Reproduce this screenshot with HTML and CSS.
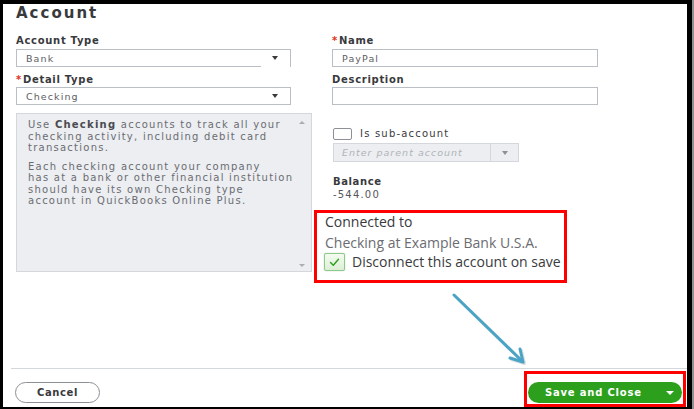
FILE: index.html
```html
<!DOCTYPE html>
<html lang="en">
<head>
<meta charset="utf-8">
<title>Account</title>
<link rel="stylesheet" href="styles.css">
</head>
<body>
<div class="frame">
  <div class="panel">
    <h1 class="title">Account</h1>
    <div class="form">
      <div class="col col-left">
        <div class="label">Account Type</div>
        <div class="select notch"><span class="val">Bank</span><i class="caret"></i></div>
        <div class="label label-gap"><span class="req">*</span>Detail Type</div>
        <div class="select select-b"><span class="val">Checking</span><i class="caret"></i></div>
        <div class="help">
          <div class="help-text">
            <p>Use <b>Checking</b> accounts to track all your<br>checking activity, including debit card<br>transactions.</p>
            <p>Each checking account your company<br>has at a bank or other financial institution<br>should have its own Checking type<br>account in QuickBooks Online Plus.</p>
          </div>
          <div class="scroll"><i class="sc-up"></i><i class="sc-down"></i></div>
        </div>
      </div>
      <div class="col col-right">
        <div class="label"><span class="req">*</span>Name</div>
        <div class="input"><span class="val">PayPal</span></div>
        <div class="label label-gap">Description</div>
        <div class="input input-b"></div>
        <div class="sub-row"><span class="box"></span><span class="sub-text">Is sub-account</span></div>
        <div class="parent"><span class="ph">Enter parent account</span><span class="parent-btn"><i class="caret caret-gray"></i></span></div>
        <div class="balance-label">Balance</div>
        <div class="balance">-544.00</div>
        <div class="callout">
          <div class="conn">Connected to</div>
          <div class="bank">Checking at Example Bank U.S.A.</div>
          <div class="disc">
            <span class="box-on"><svg width="19" height="16" viewBox="0 0 19 16"><path d="M5.5 8.5 L8.3 11.2 L13.5 5.2" fill="none" stroke="#2ca01c" stroke-width="1.4" stroke-linecap="round" stroke-linejoin="round"/></svg></span>
            <span class="disc-text">Disconnect this account on save</span>
          </div>
        </div>
      </div>
    </div>
    <div class="footer">
      <button class="cancel">Cancel</button>
      <div class="highlight">
        <button class="save"><span>Save and Close</span><i class="caret caret-white"></i></button>
      </div>
    </div>
  </div>
  <svg class="arrow" width="694" height="409" viewBox="0 0 694 409">
    <g stroke="#8fa3ad" stroke-opacity="0.35" stroke-width="3" fill="none" stroke-linecap="round" stroke-linejoin="round">
      <line x1="455.5" y1="296.5" x2="523.5" y2="362.5"/>
      <polyline points="511.5,359.5 524.5,363.5 521.5,350.5"/>
    </g>
    <g stroke="#4ba4c6" stroke-width="3" fill="none" stroke-linecap="round" stroke-linejoin="round">
      <line x1="454" y1="295" x2="522" y2="361"/>
      <polyline points="510,358 523,362 520,349"/>
    </g>
  </svg>
</div>
</body>
</html>
```
FILE: styles.css
```css
html, body {
  margin: 0;
  padding: 0;
  background: #000;
}

.frame {
  position: relative;
  width: 694px;
  height: 409px;
  box-sizing: border-box;
  padding: 4px 5px 2px 3px;
  border-right: 2px solid #8f8f8f;
  background: #000;
  font-family: "DejaVu Sans", sans-serif;
  color: #393a3d;
}

.panel {
  background: #fff;
  height: 403px;
  display: flex;
  flex-direction: column;
}

.title {
  margin: 0;
  padding-left: 13px;
  font-size: 15px;
  line-height: 18px;
  font-weight: bold;
  letter-spacing: 2px;
  color: #393a3d;
}

.form {
  display: flex;
  padding-left: 13px;
  margin-top: 12px;
}

.col-left {
  width: 296px;
}

.col-right {
  width: 266px;
  margin-left: 20px;
}

.label {
  font-size: 10px;
  line-height: 13px;
  font-weight: bold;
  letter-spacing: 0.7px;
  color: #393a3d;
  white-space: nowrap;
}

.label-gap {
  margin-top: 6px;
}

.req {
  color: #e0301e;
  margin-right: 1px;
}

.select,
.input {
  position: relative;
  box-sizing: border-box;
  height: 18px;
  border: 1px solid #babec5;
  margin-top: 2px;
  display: flex;
  align-items: center;
  background: #fff;
}

.select {
  width: 275px;
}

.select-b,
.input-b {
  margin-top: 1px;
}

.input {
  width: 266px;
}

.notch::after {
  content: "";
  position: absolute;
  right: 0;
  bottom: -1px;
  width: 29px;
  height: 1px;
  background: #fff;
}

.val {
  padding-left: 9px;
  font-size: 9.5px;
  letter-spacing: 1.1px;
  color: #5c5d62;
  flex: 1;
}

.caret {
  display: block;
  width: 0;
  height: 0;
  border-left: 3.5px solid transparent;
  border-right: 3.5px solid transparent;
  border-top: 4px solid #393a3d;
}

.select .caret {
  margin-right: 12px;
}

.caret-gray {
  border-top-color: #8d9096;
}

.caret-white {
  border-top-color: #fff;
  margin-left: auto;
  margin-right: 8px;
  border-left-width: 4px;
  border-right-width: 4px;
}

.help {
  margin-top: 8px;
  height: 159px;
  box-sizing: border-box;
  border: 1px solid #d4d7dc;
  background: #eceef1;
  display: flex;
}

.help-text {
  flex: 1;
  padding: 5px 0 0 11px;
  font-size: 10px;
  line-height: 11.5px;
  letter-spacing: 1.25px;
  color: #6b6c72;
  white-space: nowrap;
}

.help-text p {
  margin: 0;
}

.help-text p + p {
  margin-top: 7px;
}

.help-text b {
  color: #4a4b50;
}

.scroll {
  width: 18px;
  display: flex;
  flex-direction: column;
  align-items: center;
  justify-content: space-between;
  padding: 7px 0 4px;
}

.sc-up,
.sc-down {
  display: block;
  width: 0;
  height: 0;
  border-left: 3px solid transparent;
  border-right: 3px solid transparent;
}

.sc-up {
  border-bottom: 3px solid #a9acb1;
}

.sc-down {
  border-top: 3px solid #a9acb1;
}

.sub-row {
  margin-top: 22px;
  height: 13px;
  display: flex;
  align-items: center;
}

.box {
  box-sizing: border-box;
  width: 19px;
  height: 12px;
  margin-left: 1px;
  border: 1px solid #8d9096;
  border-radius: 2px;
  background: #fff;
}

.sub-text {
  margin-left: 8px;
  font-size: 10px;
  line-height: 13px;
  letter-spacing: 1.2px;
  color: #393a3d;
}

.parent {
  margin-top: 3px;
  margin-left: 1px;
  width: 186px;
  height: 19px;
  box-sizing: border-box;
  border: 1px solid #d4d7dc;
  background: #eceef1;
  display: flex;
  align-items: center;
}

.ph {
  flex: 1;
  padding-left: 8px;
  font-size: 9.5px;
  font-style: italic;
  letter-spacing: 1px;
  color: #b0b3b8;
  white-space: nowrap;
}

.parent-btn {
  width: 27px;
  height: 100%;
  border-left: 1px solid #d4d7dc;
  display: flex;
  align-items: center;
  justify-content: center;
}

.balance-label {
  margin-top: 13px;
  margin-left: 1px;
  font-size: 10px;
  line-height: 13px;
  font-weight: bold;
  letter-spacing: 0.6px;
  color: #393a3d;
}

.balance {
  margin-left: 1px;
  font-size: 10px;
  line-height: 13px;
  letter-spacing: 1.2px;
  color: #55565b;
}

.callout {
  margin: 9px 0 0 -18px;
  width: 253px;
  height: 73px;
  box-sizing: border-box;
  border: 3px solid #ff0000;
  padding-left: 8px;
  font-family: "Open Sans", "DejaVu Sans", sans-serif;
  white-space: nowrap;
  background: #fff;
}

.conn {
  font-size: 14px;
  line-height: 17px;
  color: #393a3d;
}

.bank {
  margin-top: 4px;
  font-size: 14px;
  line-height: 17px;
  color: #6b6c72;
}

.disc {
  margin: 1px 0 0 -1px;
  height: 20px;
  display: flex;
  align-items: center;
}

.box-on {
  flex: none;
  box-sizing: border-box;
  width: 21px;
  height: 18px;
  border: 1px solid #8cc98a;
  border-radius: 2px;
  background: linear-gradient(#f4fbf1, #dcefd5);
  box-shadow: 0 0 1px #7aa87a;
  display: flex;
  align-items: center;
  justify-content: center;
}

.disc-text {
  margin-left: 7px;
  font-size: 14px;
  line-height: 20px;
  font-weight: 500;
  color: #393a3d;
}

.footer {
  margin-top: auto;
  margin-left: 8px;
  height: 39px;
  box-sizing: border-box;
  border-top: 1px solid #d4d7dc;
  display: flex;
  justify-content: space-between;
  align-items: flex-start;
  padding: 0 1px 0 4px;
}

.cancel {
  margin-top: 13px;
  width: 85px;
  height: 21px;
  box-sizing: border-box;
  border: 1px solid #8d9096;
  border-radius: 11px;
  background: #fff;
  padding: 0;
  font-family: "DejaVu Sans", sans-serif;
  font-size: 10px;
  font-weight: bold;
  letter-spacing: 0.6px;
  color: #393a3d;
}

.highlight {
  margin-top: 2px;
  width: 162px;
  height: 36px;
  box-sizing: border-box;
  border: 3px solid #ff0000;
  padding: 8px 1px 0;
}

.save {
  width: 154px;
  height: 21px;
  border: none;
  border-radius: 11px;
  background: #2ca01c;
  color: #fff;
  display: flex;
  align-items: center;
  padding: 0 0 0 17px;
  box-sizing: border-box;
  font-family: "DejaVu Sans", sans-serif;
  font-size: 10px;
  font-weight: bold;
  letter-spacing: 0.8px;
}

.arrow {
  position: absolute;
  left: 0;
  top: 0;
  pointer-events: none;
}
```
